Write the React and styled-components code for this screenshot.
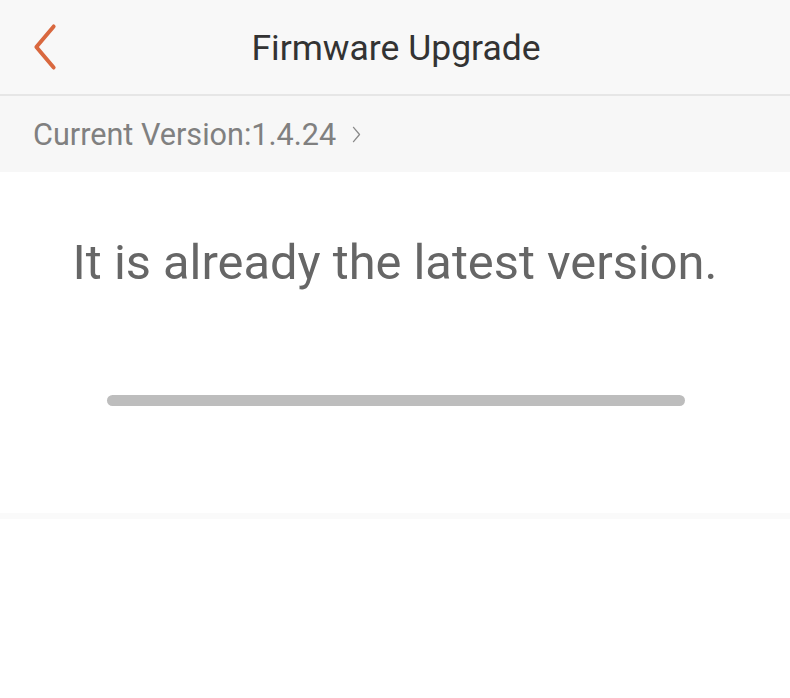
import React from 'react';
import styled, { createGlobalStyle } from 'styled-components';

const GlobalStyle = createGlobalStyle`
  html, body {
    margin: 0;
    padding: 0;
    background: #ffffff;
  }
  body {
    font-family: Roboto, 'Noto Sans', sans-serif;
  }
`;

const Page = styled.div`
  width: 790px;
  height: 698px;
  display: flex;
  flex-direction: column;
  background: #ffffff;
`;

const Header = styled.header`
  height: 94px;
  display: flex;
  align-items: center;
  justify-content: center;
  position: relative;
  background: #f8f8f8;
  border-bottom: 2px solid #e6e6e6;
`;

const BackButton = styled.button`
  position: absolute;
  left: 28px;
  top: 22px;
  width: 34px;
  height: 50px;
  padding: 0;
  border: 0;
  background: none;
  display: flex;
  align-items: center;
  justify-content: center;
`;

const Title = styled.h1`
  margin: 2px 0 0 2px;
  font-size: 35.5px;
  font-weight: 400;
  color: #333333;
`;

const VersionRow = styled.div`
  height: 76px;
  display: flex;
  align-items: center;
  gap: 16px;
  padding-left: 33px;
  background: #f7f7f7;
`;

const VersionText = styled.span`
  font-size: 30.6px;
  color: #808080;
`;

const Body = styled.main`
  height: 341px;
  display: flex;
  flex-direction: column;
  align-items: center;
  background: #ffffff;
  border-bottom: 6px solid #fafafa;
`;

const Message = styled.p`
  margin: 62px 0 0;
  font-size: 48.8px;
  font-weight: 400;
  color: #666666;
`;

const Track = styled.div`
  margin: 104px 0 0 2px;
  width: 578px;
  height: 11px;
  border-radius: 6px;
  background: #bdbdbd;
`;

const Chevron = ({ size, color, width, dir }) => (
  <svg width={size[0]} height={size[1]} viewBox="0 0 24 44" fill="none">
    <path
      d={dir === 'left' ? 'M20 3 L4 22 L20 41' : 'M4 3 L20 22 L4 41'}
      stroke={color}
      strokeWidth={width}
      strokeLinecap="round"
      strokeLinejoin="round"
    />
  </svg>
);

export default function App() {
  return (
    <>
      <GlobalStyle />
      <Page>
        <Header>
          <BackButton aria-label="Back">
            <Chevron size={[26, 48]} color="#d9683f" width={3.6} dir="left" />
          </BackButton>
          <Title>Firmware Upgrade</Title>
        </Header>
        <VersionRow>
          <VersionText>Current Version:1.4.24</VersionText>
          <Chevron size={[9, 17]} color="#8a8a8a" width={3.5} dir="right" />
        </VersionRow>
        <Body>
          <Message>It is already the latest version.</Message>
          <Track />
        </Body>
      </Page>
    </>
  );
}
